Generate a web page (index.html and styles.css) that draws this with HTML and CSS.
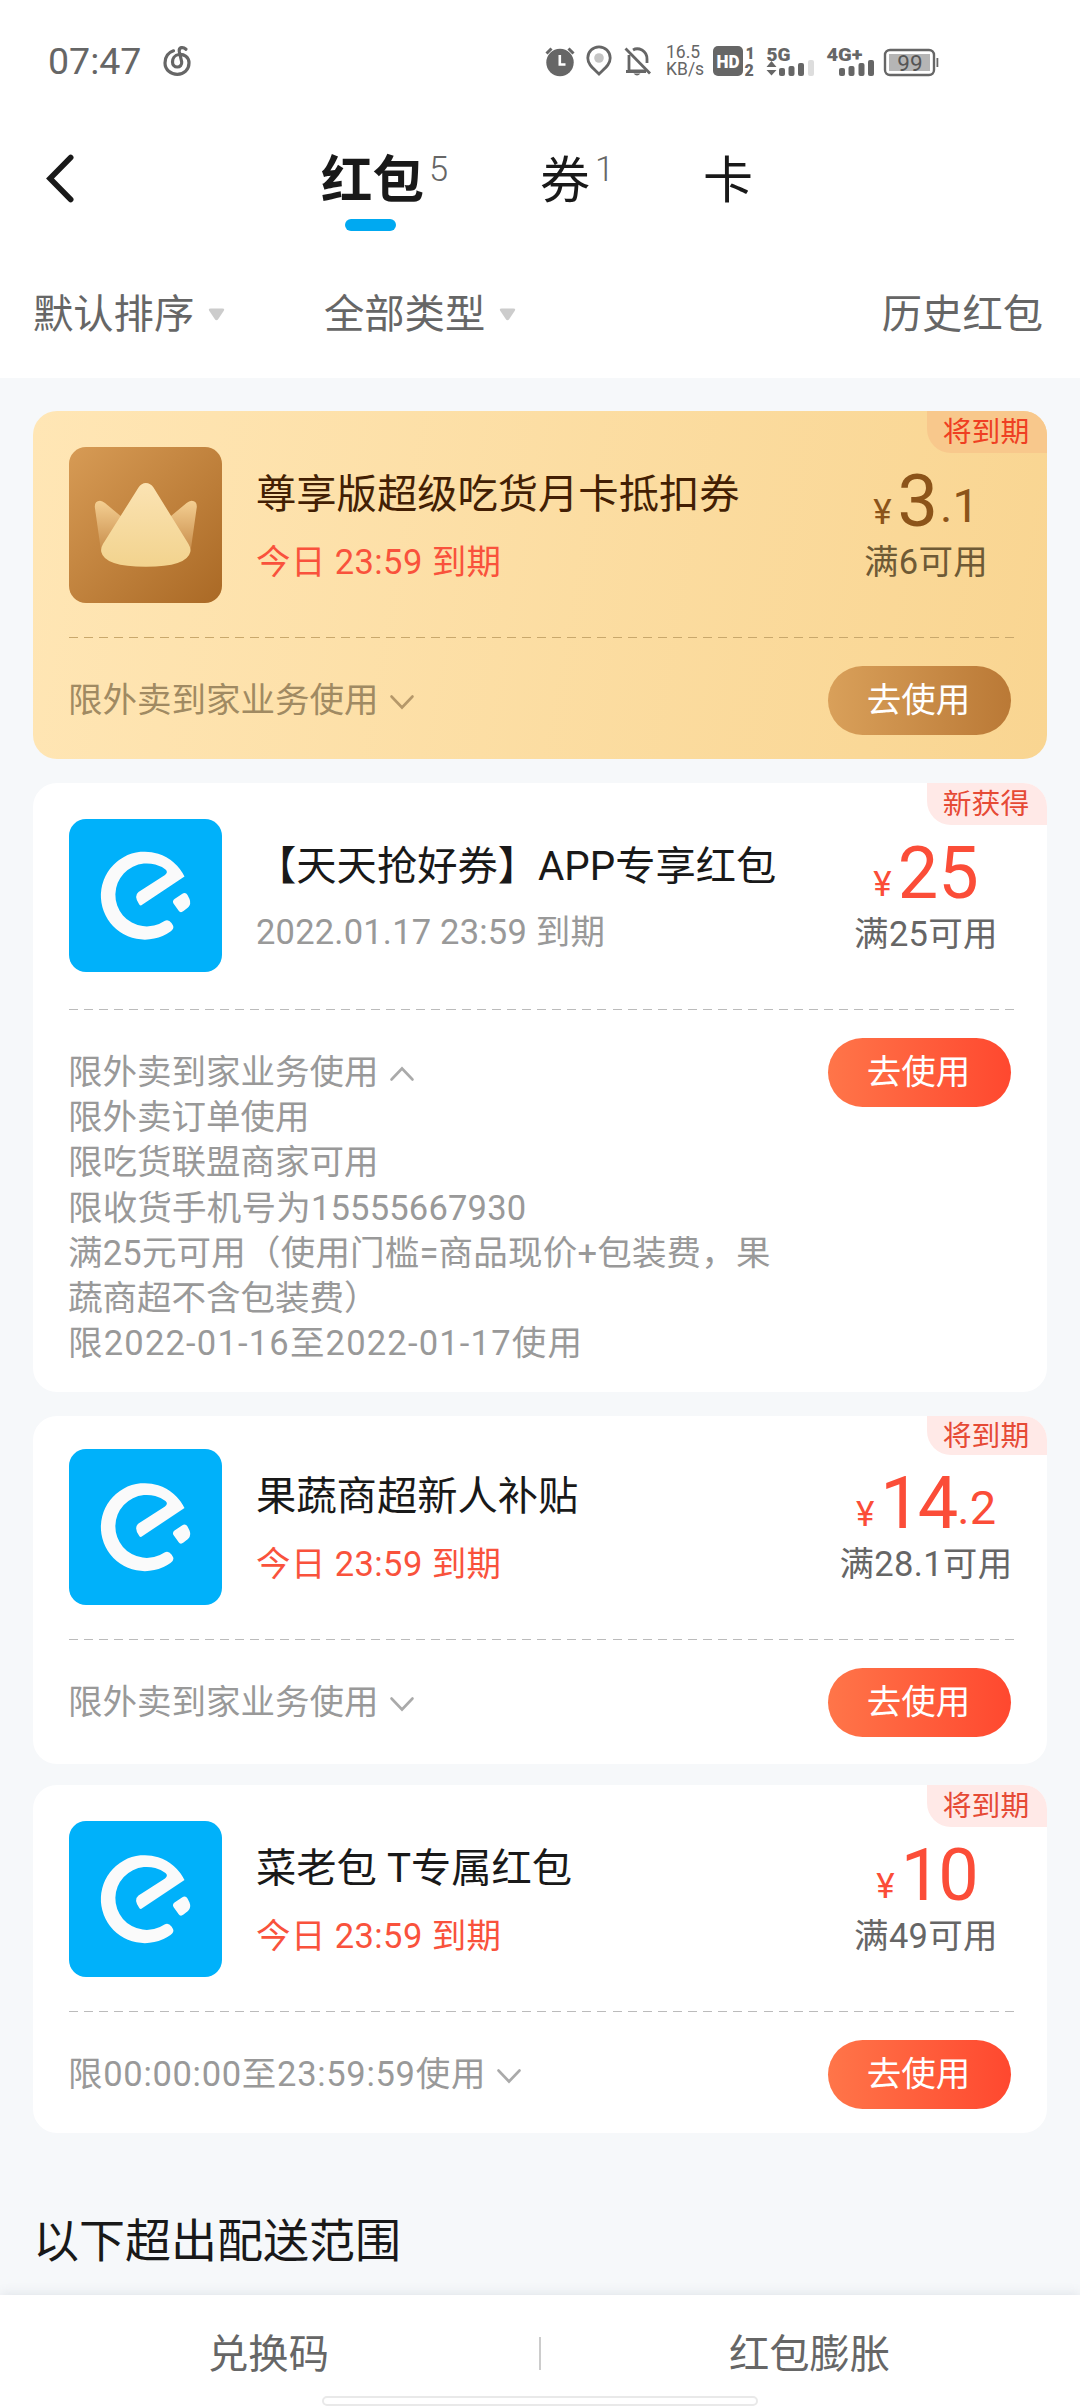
FILE: index.html
```html
<!DOCTYPE html>
<html lang="zh-CN">
<head>
<meta charset="utf-8">
<title>红包</title>
<link rel="stylesheet" href="styles.css">
</head>
<body>
<svg class="defs" width="0" height="0" aria-hidden="true">
  <symbol id="brand" viewBox="0 0 153 153">
    <path fill="#fafafa" d="M115.500 57.500A44 44 0 1 0 101.500 112.400Q105.500 109.500 104 106.500L102.500 104Q99.500 100 95.500 102A31.500 31.500 0 1 1 96.500 50.500Q99.500 53 96 56L69.500 73Q64.500 77 70 85Q71 87.500 73.500 85.500Z"/>
    <path fill="#fafafa" d="M113 75Q116.500 72.500 118.500 76L120.500 80Q122.500 85 119 88.500L114.500 92Q111.500 94.500 109.500 91.500L104.500 84.500Q103 82 105.500 80Z"/>
  </symbol>
  <symbol id="down" viewBox="0 0 26 18"><path d="M2.500 3.500L13 14.500L23.500 3.500" fill="none" stroke="currentColor" stroke-width="2.600" stroke-linecap="round"/></symbol>
  <symbol id="up" viewBox="0 0 26 18"><path d="M2.500 14.500L13 3.500L23.500 14.500" fill="none" stroke="currentColor" stroke-width="2.600" stroke-linecap="round"/></symbol>
  <symbol id="tri" viewBox="0 0 17 13"><path d="M2.500 0.500H14.500Q17 0.500 15.800 2.700L10.300 11Q8.500 13.500 6.700 11L1.200 2.700Q0 0.500 2.500 0.500Z" fill="#ccc"/></symbol>
</svg>

<header class="top">
  <div class="status">
    <span class="clock">07:47</span>
    <svg class="music" width="30" height="34" viewBox="162 44 30 34"><path d="M173.500 50.800C167 53 165 58 165 63C165 70 171 74.300 177.300 74.300C184 74.300 189 69.500 189 63C189 57 184 54 179 54.500C174.500 55 172.500 58.500 172.500 62C172.500 65 174.500 67 177.300 67C180 67 182 65 181.700 62L179.300 51.500C178.600 47 183 46.500 186 49.200" fill="none" stroke="#666" stroke-width="3.200" stroke-linecap="round"/></svg>
    <div class="system">
      <svg width="30" height="34" viewBox="546 44 30 34"><circle cx="561" cy="62.500" r="13.700" fill="#666"/><path d="M547.500 53.500L552.500 48.500M574.500 53.500L569.500 48.500" stroke="#666" stroke-width="3"/><path d="M560.800 55V64.500H566.500" fill="none" stroke="#fff" stroke-width="2.600"/></svg>
      <svg width="28" height="34" viewBox="586 44 28 34"><path d="M600 74C594 68 588.800 64.500 588.800 58A11.200 11.200 0 0 1 611.200 58C611.200 64.500 606 68 600 74Z" fill="none" stroke="#666" stroke-width="2.800"/><circle cx="600" cy="58" r="4.800" fill="#c4c4c4"/></svg>
      <svg width="28" height="34" viewBox="625 44 28 34"><g fill="none" stroke="#666" stroke-width="2.800"><path d="M626.500 48.500L651 73.500"/><path d="M630 55V71H646M627 71.500H647M634 50Q638 47.500 643 50Q648 53 648 59V63"/></g><path d="M634.500 73.500H641.500Q638 77.500 634.500 73.500Z" fill="#666"/></svg>
      <span class="speed"><b>16.5</b><b>KB/s</b></span>
      <svg width="44" height="40" viewBox="713 41 44 40"><rect x="714" y="46" width="30" height="30" rx="5" fill="#666"/><text x="729" y="68" class="hd" text-anchor="middle" textLength="23" lengthAdjust="spacingAndGlyphs">HD</text><text x="746.500" y="58.500" class="tiny">1</text><text x="745.500" y="75.500" class="tiny">2</text></svg>
      <svg width="49" height="40" viewBox="767 41 49 40"><text x="767.500" y="61" class="net" textLength="24" lengthAdjust="spacingAndGlyphs">5G</text><path d="M772.500 61L777.500 67H767.500ZM772.500 75.500L777.500 70H767.500Z" fill="#666"/><g fill="#666"><rect x="780" y="68" width="6" height="8" rx="2"/><rect x="789.500" y="66" width="6" height="10" rx="2"/><rect x="799" y="63" width="6" height="13" rx="2"/><rect x="809" y="60" width="6" height="16" rx="2" fill="#ddd"/></g></svg>
      <svg width="49" height="40" viewBox="827 41 49 40"><text x="827.500" y="61" class="net" textLength="36" lengthAdjust="spacingAndGlyphs">4G+</text><g fill="#666"><rect x="840" y="68" width="6" height="8" rx="2"/><rect x="849.500" y="66" width="6" height="10" rx="2"/><rect x="859.500" y="63" width="6" height="13" rx="2"/><rect x="869" y="60" width="6" height="16" rx="2"/></g></svg>
      <svg width="56" height="34" viewBox="884 44 56 34"><rect x="886" y="50" width="49" height="25" rx="5" fill="#fff" stroke="#666" stroke-width="2.400"/><rect x="890" y="54" width="41" height="17" fill="#b5b5b5"/><rect x="937.500" y="58" width="1.800" height="9" fill="#666"/><text x="911" y="71" class="level" text-anchor="middle">99</text></svg>
    </div>
  </div>
  <nav class="tabs">
    <svg class="back" width="30" height="52" viewBox="45 152 30 52"><path d="M70.700 157.500L50 178.500L70.700 199.500" fill="none" stroke="#191919" stroke-width="5.600" stroke-linecap="round"/></svg>
    <div class="tab active"><span>红包</span><i>5</i></div>
    <div class="tab"><span>券</span><i>1</i></div>
    <div class="tab"><span>卡</span></div>
  </nav>
  <div class="filters">
    <span class="filter">默认排序<svg width="17" height="13"><use href="#tri"/></svg></span>
    <span class="filter">全部类型<svg width="17" height="13"><use href="#tri"/></svg></span>
    <span class="history">历史红包</span>
  </div>
</header>

<main class="list">
  <article class="card gold">
    <span class="tag">将到期</span>
    <div class="head">
      <svg class="logo" width="153" height="156" viewBox="0 0 153 156">
        <defs>
          <linearGradient id="tile" x1="0" y1="0" x2="1" y2="1"><stop offset="0" stop-color="#d79b55"/><stop offset="1" stop-color="#aa6925"/></linearGradient>
          <linearGradient id="peak" x1="0" y1="0" x2="0" y2="1"><stop offset="0" stop-color="#fbe3b3"/><stop offset="1" stop-color="#f2d38e"/></linearGradient>
          <linearGradient id="wing" x1="0" y1="0" x2="0" y2="1"><stop offset="0" stop-color="#f4cf92"/><stop offset="1" stop-color="#c88d4b"/></linearGradient>
        </defs>
        <rect width="153" height="156" rx="17" fill="url(#tile)"/>
        <path d="M25.800 60Q25.500 54 31 53.700Q33.500 54 36 56L54 71L32 104Z" fill="url(#wing)"/>
        <path d="M127.800 60Q128.100 54 122.600 53.700Q120 54 117.600 56L99.600 71L121.600 104Z" fill="url(#wing)"/>
        <path d="M69.500 40.500Q72.500 36 76.800 36Q81.500 36 84.500 40.500L119.500 97Q122 101 121.300 105Q118 119.700 76.800 119.700Q35.500 119.700 32.300 105Q31.500 101 34 97Z" fill="url(#peak)"/>
      </svg>
      <div class="info"><h2>尊享版超级吃货月卡抵扣券</h2><p class="soon">今日 23:59 到期</p></div>
      <div class="price"><p class="amount"><small>¥</small><b>3</b><em>.1</em></p><p class="limit">满6可用</p></div>
    </div>
    <div class="foot">
      <div class="rules"><p>限外卖到家业务使用<svg width="26" height="18"><use href="#down"/></svg></p></div>
      <button class="use">去使用</button>
    </div>
  </article>

  <article class="card open">
    <span class="tag">新获得</span>
    <div class="head">
      <svg class="logo brand" width="153" height="153"><use href="#brand"/></svg>
      <div class="info"><h2>【天天抢好券】APP专享红包</h2><p class="date">2022.01.17 23:59 到期</p></div>
      <div class="price"><p class="amount"><small>¥</small><b>25</b></p><p class="limit">满25可用</p></div>
    </div>
    <div class="foot">
      <div class="rules">
        <p>限外卖到家业务使用<svg width="26" height="18"><use href="#up"/></svg></p>
        <p>限外卖订单使用</p>
        <p>限吃货联盟商家可用</p>
        <p class="phone">限收货手机号为15555667930</p>
        <p class="phone">满25元可用（使用门槛=商品现价+包装费，果</p>
        <p>蔬商超不含包装费）</p>
        <p class="wide">限2022-01-16至2022-01-17使用</p>
      </div>
      <button class="use">去使用</button>
    </div>
  </article>

  <article class="card raised">
    <span class="tag">将到期</span>
    <div class="head">
      <svg class="logo brand" width="153" height="156"><use href="#brand" width="153" height="156"/></svg>
      <div class="info"><h2>果蔬商超新人补贴</h2><p class="soon">今日 23:59 到期</p></div>
      <div class="price"><p class="amount narrow"><small>¥</small><b>14</b><em>.2</em></p><p class="limit">满28.1可用</p></div>
    </div>
    <div class="foot">
      <div class="rules"><p>限外卖到家业务使用<svg width="26" height="18"><use href="#down"/></svg></p></div>
      <button class="use">去使用</button>
    </div>
  </article>

  <article class="card">
    <span class="tag">将到期</span>
    <div class="head">
      <svg class="logo brand" width="153" height="156"><use href="#brand" width="153" height="156"/></svg>
      <div class="info"><h2>菜老包 T专属红包</h2><p class="soon">今日 23:59 到期</p></div>
      <div class="price"><p class="amount narrow"><small>¥</small><b>10</b></p><p class="limit">满49可用</p></div>
    </div>
    <div class="foot">
      <div class="rules"><p class="hours">限00:00:00至23:59:59使用<svg width="26" height="18"><use href="#down"/></svg></p></div>
      <button class="use">去使用</button>
    </div>
  </article>

  <h3 class="section">以下超出配送范围</h3>
</main>

<footer class="bottom">
  <div class="actions"><span>兑换码</span><i></i><span>红包膨胀</span></div>
  <div class="home"></div>
</footer>
</body>
</html>
```
FILE: styles.css
```css
* { box-sizing: border-box; margin: 0; padding: 0; }

body {
  width: 1080px;
  height: 2408px;
  overflow: hidden;
  display: flex;
  flex-direction: column;
  background: #f6f8fa;
  color: #191919;
  font-family: Roboto, "Noto Sans CJK SC", sans-serif;
  font-weight: 400;
}

svg { display: block; flex: none; }
.defs { display: none; }
i, em { font-style: normal; }

/* header */
.top { height: 378px; flex: none; background: #fff; }

.status {
  display: flex;
  align-items: center;
  height: 122px;
  padding-left: 48px;
  color: #666;
}
.clock { width: 96px; font-size: 37.500px; line-height: 44px; font-weight: 400; white-space: nowrap; }
.music { margin-left: 18px; }
.system { display: flex; align-items: center; margin-left: 353px; }
.system svg { overflow: visible; }
.system svg:nth-child(2) { margin-left: 10px; }
.system svg:nth-child(3) { margin-left: 11px; }
.speed { display: flex; flex-direction: column; width: 36px; margin: 0 10px 0 14px; font-size: 17.500px; line-height: 17px; }
.speed b { font-weight: 400; white-space: nowrap; }
.system svg:nth-child(6) { margin-left: 10px; }
.system svg:nth-child(7) { margin-left: 11px; }
.system svg:nth-child(8) { margin-left: 8px; }
.hd { font: 900 19px Roboto, sans-serif; fill: #fff; }
.tiny { font: 900 16px Roboto, sans-serif; fill: #666; }
.net { font: 900 19px Roboto, sans-serif; fill: #666; }
.level { font: 400 22.500px Roboto, sans-serif; fill: #555; }

.tabs { display: flex; height: 130px; padding-left: 45px; }
.back { margin-top: 30px; }
.tab { position: relative; display: flex; height: 116px; }
.tab span { font-size: 50px; line-height: 119px; }
.tab i { margin: 27px 0 0 5px; font-size: 34.500px; line-height: 40px; font-weight: 300; color: #666; }
.tab.active { margin-left: 246px; width: 219px; }
.tab.active span { font-size: 51.500px; line-height: 118px; font-weight: 700; }
.tab.active::after {
  content: "";
  position: absolute;
  left: 24px;
  bottom: 7px;
  width: 51px;
  height: 12px;
  border-radius: 6px;
  background: #00a9f1;
}
.tab:nth-child(3) { width: 163px; }

.filters { display: flex; align-items: center; height: 117px; padding: 0 37px 0 33px; font-size: 40.300px; color: #666; }
.filter { display: flex; align-items: center; gap: 14px; width: 291px; }
.filter svg { margin-top: 7px; }
.history { margin-left: auto; }

/* coupon list */
.list { flex: 1; display: flex; flex-direction: column; padding: 33px 33px 0; }

.card {
  position: relative;
  height: 348px;
  flex: none;
  padding-top: 36px;
  border-radius: 24px;
  background: #fff;
}
.card + .card { margin-top: 24px; }
.card.raised + .card { margin-top: 21px; }
.card.open { height: 609px; }
.card.raised { padding-top: 33px; }
.card.gold { background: linear-gradient(100deg, #ffe6b5, #f9d591); }

.tag {
  position: absolute;
  top: 0;
  right: 0;
  width: 120px;
  height: 42px;
  padding-right: 2px;
  border-radius: 0 24px 0 24px;
  background: #ffe9e7;
  color: #e64a35;
  font-size: 28.800px;
  line-height: 42px;
  text-align: center;
}
.raised .tag { height: 39px; line-height: 41px; }
.gold .tag { background: #f8c88c; color: #ef3f22; }

.head {
  display: grid;
  grid-template-columns: 153px 1fr 230px;
  column-gap: 34px;
  height: 190px;
  padding: 0 6px 0 36px;
}
.brand { border-radius: 17px; background: #00b1fa; }
.info { padding-top: 24px; white-space: nowrap; }
.info h2 { font-size: 40.300px; line-height: 48px; font-weight: 400; }
.info p { margin-top: 19px; font-size: 34.500px; line-height: 48px; letter-spacing: .4px; }
.gold h2 { color: #431f04; }
.soon { color: #f9523c; }
.info .date { margin-top: 17px; color: #999; letter-spacing: .200px; }

.price { padding-top: 19px; text-align: center; white-space: nowrap; }
.amount { height: 72px; line-height: 72px; color: #fb4d38; }
.amount small { font-size: 35px; margin-right: 6px; vertical-align: 2px; }
.amount b { font-size: 72px; font-weight: 400; }
.amount.narrow b { letter-spacing: -3px; }
.amount em { margin-left: 2px; font-size: 47px; vertical-align: 4px; }
.limit { font-size: 34.500px; line-height: 48px; letter-spacing: .3px; color: #666; }
.gold .amount { color: #8c541a; }
.gold .limit { color: #6e5a35; }

.foot { position: relative; display: flex; justify-content: space-between; margin-left: 36px; padding: 29px 36px 0 0; }
.foot::before {
  content: "";
  position: absolute;
  left: 0;
  top: 0;
  width: 946px;
  height: 1px;
  background: repeating-linear-gradient(90deg, #bbb 0 9px, transparent 9px 15.100px);
}
.gold .foot::before { background: repeating-linear-gradient(90deg, #c9a86c 0 9px, transparent 9px 15.100px); }
.rules { margin-left: -1px; padding-top: 12px; font-size: 34.500px; line-height: 45.200px; color: #999; }
.rules p { display: flex; align-items: center; height: 45.200px; white-space: nowrap; }
.rules svg { margin: 3px 0 0 10px; color: #aaa; }
.rules .phone { letter-spacing: .200px; }
.rules .wide { letter-spacing: 1.200px; }
.rules .hours { letter-spacing: .700px; }
.gold .rules { color: #a08a62; }
.gold .rules svg { color: #b5986a; }
.use {
  width: 183px;
  height: 69px;
  padding-right: 2px;
  border: 0;
  border-radius: 35px;
  background: linear-gradient(90deg, #ff7549, #ff482f);
  color: #fff;
  font: 400 34.500px/67px Roboto, "Noto Sans CJK SC", sans-serif;
}
.gold .use { background: linear-gradient(90deg, #d9a05a, #ba7936); }

.section { margin-top: 72px; font-size: 46px; line-height: 72px; font-weight: 400; }

/* bottom bar */
.bottom { position: relative; height: 113px; flex: none; background: #fff; box-shadow: 0 -2px 10px rgba(90, 110, 130, .12); }
.actions { display: flex; align-items: center; height: 116px; font-size: 40.300px; color: #666; }
.actions span { flex: 1; padding: 0 2px 5px 0; text-align: center; }
.actions i { width: 2px; height: 33px; background: #ccc; }
.home { position: absolute; left: 322px; bottom: 2px; width: 436px; height: 10px; border: 2px solid #e9e9e9; border-radius: 5px; background: #fff; }
```
